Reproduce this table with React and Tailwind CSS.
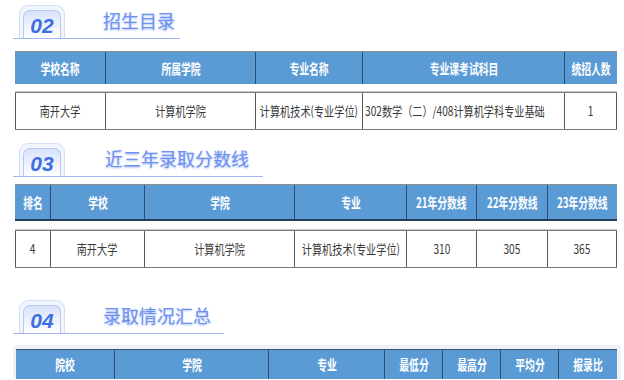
import React from "react";

const SectionTitle = ({ num, title, lineWidth, gap }) => (
  <div className="flex items-center border-b border-[#9db8f3]" style={{ width: lineWidth }}>
    {/* tab badge */}
    <div className="ml-[6px] h-[33px] w-[46px] rounded-t-[9px] border border-b-0 border-[#d3dff8] bg-[#f1f5fe] px-[3px] pt-[4px] flex">
      <div className="flex-1 rounded-t-[7px] border border-b-0 border-[#b7c8f2] bg-gradient-to-b from-[#d9e2fb] to-white flex items-center justify-center">
        <span className="text-[21px] leading-none font-bold italic text-[#3e6fe2] font-['Liberation_Sans',sans-serif] pt-[2px]">
          {num}
        </span>
      </div>
    </div>
    <span
      className="pb-[4px] text-[18px] leading-none text-[#6f92f0] [text-shadow:0_1px_2px_rgba(90,130,235,0.55)]"
      style={{ marginLeft: gap }}
    >
      {title}
    </span>
  </div>
);

const HeadCell = ({ children, last }) => (
  <div
    className={
      "flex items-center justify-center overflow-visible " +
      (last ? "" : "border-r border-[#2e4f73]")
    }
  >
    <span className="inline-block whitespace-nowrap text-[14px] font-bold text-white scale-x-[0.7]">
      {children}
    </span>
  </div>
);

const DataCell = ({ children, left, start }) => (
  <div
    className={
      "flex items-center border-r border-[#5a5a5a] " +
      (left ? "border-l " : "") +
      (start ? "justify-start pl-[2px]" : "justify-center")
    }
  >
    <span
      className={
        "inline-block whitespace-nowrap text-[13px] text-[#3a3a3a] " +
        (start ? "origin-left scale-x-[0.78]" : "scale-x-[0.78]")
      }
    >
      {children}
    </span>
  </div>
);

export default function App() {
  return (
    <div className="w-[624px] h-[380px] overflow-hidden bg-white font-['Noto_Sans_CJK_SC',sans-serif]">
      {/* 02 招生目录 */}
      <div className="pt-[5px] pl-[13px]">
        <SectionTitle num="02" title="招生目录" lineWidth={167} gap={38} />
      </div>

      <div className="ml-[15px] w-[602px] mt-[12px]">
        <div className="grid grid-cols-[91px_150px_107px_202px_52px] h-[33px] border-t border-[#8c8c8c] bg-[#5b9bd5]">
          <HeadCell>学校名称</HeadCell>
          <HeadCell>所属学院</HeadCell>
          <HeadCell>专业名称</HeadCell>
          <HeadCell>专业课考试科目</HeadCell>
          <HeadCell last>统招人数</HeadCell>
        </div>
        <div className="h-[8px] border-b border-[#c8c8c8]" />
        <div className="grid grid-cols-[91px_150px_107px_202px_52px] h-[38px] border-y border-[#7a7a7a]">
          <DataCell left>南开大学</DataCell>
          <DataCell>计算机学院</DataCell>
          <DataCell>计算机技术(专业学位)</DataCell>
          <DataCell start>302数学（二）/408计算机学科专业基础</DataCell>
          <DataCell>1</DataCell>
        </div>
      </div>

      {/* 03 近三年录取分数线 */}
      <div className="mt-[13px] pl-[13px]">
        <SectionTitle num="03" title="近三年录取分数线" lineWidth={250} gap={40} />
      </div>

      <div className="ml-[15px] w-[602px] mt-[7px]">
        <div className="grid grid-cols-[36px_94px_150px_112px_70px_71px_69px] h-[37px] border-t border-[#8c8c8c] border-b-2 border-b-[#24405e] bg-[#5b9bd5]">
          <HeadCell>排名</HeadCell>
          <HeadCell>学校</HeadCell>
          <HeadCell>学院</HeadCell>
          <HeadCell>专业</HeadCell>
          <HeadCell>21年分数线</HeadCell>
          <HeadCell>22年分数线</HeadCell>
          <HeadCell last>23年分数线</HeadCell>
        </div>
        <div className="h-[9px] border-b border-[#c8c8c8]" />
        <div className="grid grid-cols-[36px_94px_150px_112px_70px_71px_69px] h-[38px] border-y border-[#7a7a7a]">
          <DataCell left>4</DataCell>
          <DataCell>南开大学</DataCell>
          <DataCell>计算机学院</DataCell>
          <DataCell>计算机技术(专业学位)</DataCell>
          <DataCell>310</DataCell>
          <DataCell>305</DataCell>
          <DataCell>365</DataCell>
        </div>
      </div>

      {/* 04 录取情况汇总 */}
      <div className="mt-[32px] pl-[13px]">
        <SectionTitle num="04" title="录取情况汇总" lineWidth={211} gap={38} />
      </div>

      <div className="ml-[13px] w-[608px] mt-[11px] bg-[#eef1f7] pt-[4px] pl-[3px] pr-[4px]">
        <div className="grid grid-cols-[99px_154px_116px_58px_58px_58px_58px] h-[30px] border-t border-[#3d5570] bg-[#5b9bd5]">
          <HeadCell>院校</HeadCell>
          <HeadCell>学院</HeadCell>
          <HeadCell>专业</HeadCell>
          <HeadCell>最低分</HeadCell>
          <HeadCell>最高分</HeadCell>
          <HeadCell>平均分</HeadCell>
          <HeadCell last>报录比</HeadCell>
        </div>
      </div>
    </div>
  );
}
